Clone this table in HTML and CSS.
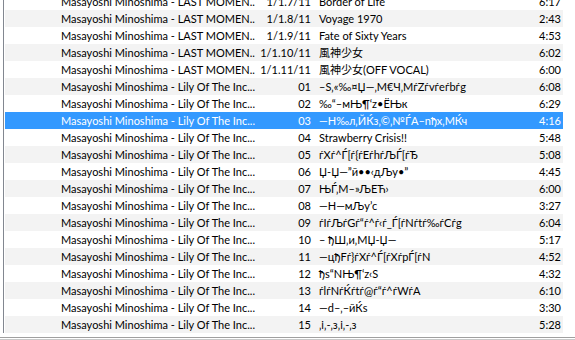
FILE: index.html
```html
<!DOCTYPE html>
<html lang="ja">
<head>
<meta charset="utf-8">
<title>Playlist</title>
<link rel="stylesheet" href="styles.css">
</head>
<body>
<div class="frame">
  <div class="list">
    <div class="row"><span></span><span class="album">Masayoshi Minoshima - LAST MOMEN...</span><span class="num">1/1.7/11</span><span class="title">Border of Life</span><span class="dur">6:17</span></div>
    <div class="row alt"><span></span><span class="album">Masayoshi Minoshima - LAST MOMEN...</span><span class="num">1/1.8/11</span><span class="title">Voyage 1970</span><span class="dur">2:43</span></div>
    <div class="row"><span></span><span class="album">Masayoshi Minoshima - LAST MOMEN...</span><span class="num">1/1.9/11</span><span class="title">Fate of Sixty Years</span><span class="dur">4:53</span></div>
    <div class="row alt"><span></span><span class="album">Masayoshi Minoshima - LAST MOMEN...</span><span class="num">1/1.10/11</span><span class="title">風神少女</span><span class="dur">6:02</span></div>
    <div class="row"><span></span><span class="album">Masayoshi Minoshima - LAST MOMEN...</span><span class="num">1/1.11/11</span><span class="title">風神少女(OFF VOCAL)</span><span class="dur">6:00</span></div>
    <div class="row alt"><span></span><span class="album">Masayoshi Minoshima - Lily Of The Inc...</span><span class="num">01</span><span class="title">–S‚«‰¤Џ—‚М€Ч‚МѓZѓvѓeѓbѓg</span><span class="dur">6:08</span></div>
    <div class="row"><span></span><span class="album">Masayoshi Minoshima - Lily Of The Inc...</span><span class="num">02</span><span class="title">‰“–мЊ¶‘z•ЁЊк</span><span class="dur">6:29</span></div>
    <div class="row sel"><span></span><span class="album">Masayoshi Minoshima - Lily Of The Inc...</span><span class="num">03</span><span class="title">—H‰л‚ЙЌз‚©‚№ЃA–nђх‚МЌч</span><span class="dur">4:16</span></div>
    <div class="row"><span></span><span class="album">Masayoshi Minoshima - Lily Of The Inc...</span><span class="num">04</span><span class="title">Strawberry Crisis!!</span><span class="dur">5:48</span></div>
    <div class="row alt"><span></span><span class="album">Masayoshi Minoshima - Lily Of The Inc...</span><span class="num">05</span><span class="title">ѓXѓ^Ѓ[ѓ{ѓEѓhѓЉЃ[ѓЂ</span><span class="dur">5:08</span></div>
    <div class="row"><span></span><span class="album">Masayoshi Minoshima - Lily Of The Inc...</span><span class="num">06</span><span class="title">Џ-Џ—”й••‹дЉy•”</span><span class="dur">4:45</span></div>
    <div class="row alt"><span></span><span class="album">Masayoshi Minoshima - Lily Of The Inc...</span><span class="num">07</span><span class="title">ЊЃ‚М–»ЉЕЋ›</span><span class="dur">6:00</span></div>
    <div class="row"><span></span><span class="album">Masayoshi Minoshima - Lily Of The Inc...</span><span class="num">08</span><span class="title">—H—мЉy’c</span><span class="dur">3:27</span></div>
    <div class="row alt"><span></span><span class="album">Masayoshi Minoshima - Lily Of The Inc...</span><span class="num">09</span><span class="title">ѓIѓЉѓGѓ“ѓ^ѓ‹ѓ_Ѓ[ѓNѓtѓ‰ѓCѓg</span><span class="dur">6:04</span></div>
    <div class="row"><span></span><span class="album">Masayoshi Minoshima - Lily Of The Inc...</span><span class="num">10</span><span class="title">– ђШ‚и‚МЏ-Џ—</span><span class="dur">5:17</span></div>
    <div class="row alt"><span></span><span class="album">Masayoshi Minoshima - Lily Of The Inc...</span><span class="num">11</span><span class="title">—цђFѓ}ѓXѓ^Ѓ[ѓXѓpЃ[ѓN</span><span class="dur">4:52</span></div>
    <div class="row"><span></span><span class="album">Masayoshi Minoshima - Lily Of The Inc...</span><span class="num">12</span><span class="title">ђs“NЊ¶‘z‹S</span><span class="dur">4:32</span></div>
    <div class="row alt"><span></span><span class="album">Masayoshi Minoshima - Lily Of The Inc...</span><span class="num">13</span><span class="title">ѓlѓNѓЌѓtѓ@ѓ“ѓ^ѓWѓA</span><span class="dur">6:10</span></div>
    <div class="row"><span></span><span class="album">Masayoshi Minoshima - Lily Of The Inc...</span><span class="num">14</span><span class="title">—d–‚–йЌs</span><span class="dur">3:30</span></div>
    <div class="row alt"><span></span><span class="album">Masayoshi Minoshima - Lily Of The Inc...</span><span class="num">15</span><span class="title">‚і‚-‚з‚і‚-‚з</span><span class="dur">5:28</span></div>
  </div>
</div>
<div class="status"></div>
</body>
</html>
```

FILE: styles.css
```css
html, body {
  margin: 0;
  padding: 0;
  background: #ffffff;
}

body {
  width: 575px;
  height: 340px;
  overflow: hidden;
  font-family: Lato, "Liberation Sans", "Noto Sans CJK JP", sans-serif;
  font-size: 11px;
  color: #000000;
}

.frame {
  margin-left: 3px;
  height: 333px;
  border-left: 1px solid #828790;
  padding-left: 1px;
  overflow: hidden;
}

.list {
  margin-top: -7px;
  width: 558px;
}

.row {
  display: grid;
  grid-template-columns: 50px 200px 60px 1fr 50px;
  height: 17px;
  line-height: 17px;
  white-space: nowrap;
  background: #ffffff;
}

.row.alt {
  background: #f3f3f3;
}

.row.sel {
  background: #3399ff;
  color: #ffffff;
}

.row span {
  overflow: hidden;
}

.album {
  padding-left: 6px;
}

.num {
  text-align: right;
  padding-right: 4px;
}

.title {
  padding-left: 4px;
}

.dur {
  text-align: right;
  padding-right: 2px;
}

.status {
  margin-top: 4px;
  height: 1px;
  border-top: 1px solid #a0a0a0;
  border-bottom: 1px solid #c8c8c8;
}
```
